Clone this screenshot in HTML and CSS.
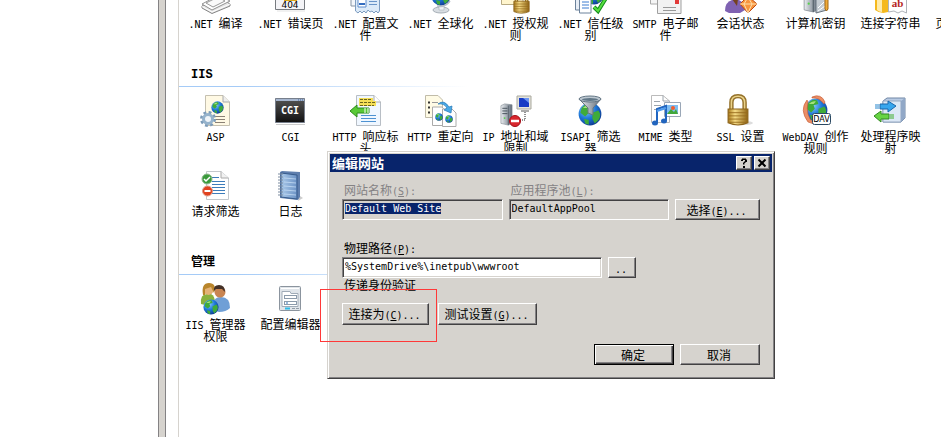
FILE: index.html
```html
<!DOCTYPE html>
<html lang="zh-CN">
<head>
<meta charset="utf-8">
<title>IIS 管理器</title>
<link rel="stylesheet" href="styles.css">
</head>
<body>
<svg class="defs" aria-hidden="true">
  <defs>
    <radialGradient id="sea" cx=".35" cy=".3" r=".8"><stop offset="0" stop-color="#8fd0ff"/><stop offset=".5" stop-color="#1e78d8"/><stop offset="1" stop-color="#0a2f86"/></radialGradient>
    <linearGradient id="gold" x2="1"><stop offset="0" stop-color="#a8791a"/><stop offset=".35" stop-color="#f6dc86"/><stop offset="1" stop-color="#8f6312"/></linearGradient>
    <linearGradient id="blue" x2="1"><stop offset="0" stop-color="#a9c8e8"/><stop offset="1" stop-color="#6c93c6"/></linearGradient>
    <linearGradient id="dark" y2="1" x2="0"><stop offset="0" stop-color="#555"/><stop offset="1" stop-color="#111"/></linearGradient>
    <linearGradient id="steel" x2="1"><stop offset="0" stop-color="#eceff2"/><stop offset="1" stop-color="#5f6b78"/></linearGradient>
    <symbol id="globe" viewBox="0 0 20 20"><circle cx="10" cy="10" r="9.5" fill="url(#sea)"/><path d="M3 5Q7 0 11 2L12 5 8 6 9 9 6 12 2 9ZM12 9 17 7Q20 11 17 15L14 18 12 14ZM5 14 9 15 9 19 6 18Z" fill="#3fab3a"/><path d="M4 5Q7 2 10 3L8 5Z" fill="#a5e27b"/></symbol>
    <symbol id="lock" viewBox="0 0 20 30" preserveAspectRatio="none"><path d="M4 15V8Q4 2 10 2T16 8V15" fill="none" stroke="#94712a" stroke-width="4"/><path d="M4 15V8Q4 2 10 2T16 8V15" fill="none" stroke="#ead28a" stroke-width="1.4"/><path d="M1 14H19V27Q10 31 1 27Z" fill="url(#gold)" stroke="#8c641b"/><path d="M1 17.500H19M1 20.500H19M1 23.500H19M2 26.500H18" stroke="#94691c" stroke-width=".8"/></symbol>
    <symbol id="server" viewBox="0 0 14 26" preserveAspectRatio="none"><path d="M1 3 5 1 13 2V23L9 25 1 23Z" fill="url(#steel)" stroke="#858d95" stroke-width=".7"/><path d="M2.500 6H8M2.500 9H8M2.500 12H8" stroke="#404b55"/><path d="M9 3V25" stroke="#56616b"/><circle cx="5" cy="17" r="1" fill="#57d04c"/></symbol>
  </defs>
</svg>
<div class="window">
  <aside class="tree"></aside>
  <div class="splitter"></div>
  <main class="features">
    <ul class="grid cut">
      <li><a href="#"><svg viewBox="0 0 32 32"><path d="M3 24 20 15 31 22V24L13 31.500 3 26Z" fill="#e5e5e5" stroke="#858585"/><path d="M3 22 20 13 31 19 13 28Z" fill="#fff" stroke="#929292"/><path d="M7 21 19 15 26 19 14 25Z" fill="#fafafa" stroke="#999"/><path d="M3 24.500 13 30 31 22" fill="none" stroke="#fff"/></svg><span><i>.NET </i>编译</span></a></li>
      <li><a href="#"><svg viewBox="0 0 32 32"><path d="M1.500 8H30.500V27.500H1.500Z" fill="#f4f4f7" stroke="#777b80"/><path d="M10 10H23V19H10Z" fill="#dba719"/><path d="M12 17H21" stroke="#775400"/><text x="16" y="26" class="t404">404</text><path d="M3 29H31" stroke="#e3e3e3"/></svg><span><i>.NET </i>错误页</span></a></li>
      <li><a href="#"><svg viewBox="0 0 32 32"><path d="M5 12H2V24H7" fill="#f3f6fa" stroke="#8794a3"/><path d="M6.500 10H30.500V29L29 31 27 29 25 31 23 29 21 30 19 28 17 31 15 29 13 31 11 29 9 31 6.500 29Z" fill="#dceaf8" stroke="#7d9cc0"/><path d="M9 14H17V25H9Z" fill="#fff" stroke="#5e8ccb"/><path d="M20 19.500H28M20 22.500H28" stroke="#6994c8"/><path d="M10 22H16" stroke="#346dc0" stroke-width="2"/></svg><span><i>.NET </i>配置文件</span></a></li>
      <li><a href="#"><svg viewBox="0 0 32 32"><ellipse cx="17" cy="28" rx="8" ry="3" fill="#d8dde2" stroke="#a7afb7"/><path d="M15 23H20V28H15Z" fill="#eef1f4" stroke="#a9b2bb" stroke-width=".6"/><use href="#globe" x="7" y="4" width="20" height="20"/><path d="M26 19Q21 26 13 24" fill="none" stroke="#b5bdc7" stroke-width="1.500"/></svg><span><i>.NET </i>全球化</span></a></li>
      <li><a href="#"><svg viewBox="0 0 32 32"><path d="M2.500 3H24V22.500H2.500Z" fill="#fff5cd" stroke="#b7aa83"/><use href="#lock" x="14" y="8" width="17" height="24"/></svg><span><i>.NET </i>授权规则</span></a></li>
      <li><a href="#"><svg viewBox="0 0 32 32"><use href="#globe" x="10" y="3" width="20" height="20"/><path d="M1.500 10H12V28H1.500Z" fill="#e7edf5" stroke="#6c829b"/><path d="M5.500 12H17V31H5.500Z" fill="#fff" stroke="#6c829b"/><path d="M8 17H15M8 20H15M8 23H15M8 26H15" stroke="#3c7dd0"/><path d="M20 25 24 29 32 16" fill="none" stroke="#138b1c" stroke-width="4"/><path d="M20 25 24 29 32 16" fill="none" stroke="#57df40" stroke-width="2"/></svg><span><i>.NET </i>信任级别</span></a></li>
      <li><a href="#"><svg viewBox="0 0 32 32"><path d="M1.500 8H23V22H1.500Z" fill="#f5f5f5" stroke="#aaa"/><path d="M8.500 14H32V31.500H8.500Z" fill="#f2f2f2" stroke="#a0a0a0"/><path d="M14 25.500H27M14 28.500H27" stroke="#999"/><path d="M26 18H30V22H26Z" fill="#e23938"/></svg><span><i>SMTP </i>电子邮件</span></a></li>
      <li><a href="#"><svg viewBox="0 0 32 32"><path d="M1 29Q1 20 8 18H15Q21 21 21 28L16 31H5Z" fill="#7f62b2"/><path d="M8 17H14L13 24Z" fill="#74411f"/><path d="M24 14 33 22 24 31 16 22Z" fill="#f8953d" stroke="#bc4915"/><path d="M16 22H33M20 22 24 31 28 22 24 15Z" fill="none" stroke="#ffe0ae"/></svg><span>会话状态</span></a></li>
      <li><a href="#"><svg viewBox="0 0 32 32"><use href="#server" x="4" y="4" width="16" height="27"/><path d="M17 14 28 11V28L17 31Z" fill="#c5ccd3" stroke="#68737e"/><path d="M19 26 25 20M19 29 26 24" stroke="#fff"/><path d="M26 13H29V27L27.500 29 26 27Z" fill="#efaa38" stroke="#a36815"/></svg><span>计算机密钥</span></a></li>
      <li><a href="#"><svg viewBox="0 0 32 32"><path d="M1 9Q9 4 18 9V28Q9 34 1 28Z" fill="#f5b91d"/><path d="M3 9Q6 7 8 7V30Q5 30 3 28Z" fill="#ffebaa"/><path d="M14.500 12H32.500V31L28 29 24 31 20 29 14.500 30Z" fill="#fff" stroke="#afb4ba"/><text x="23.500" y="25" class="tab">ab</text></svg><span>连接字符串</span></a></li>
      <li><a href="#"><svg viewBox="0 0 32 32"><path d="M3 3H29V29H3Z" fill="#fff" stroke="#999"/></svg><span>页面和控件</span></a></li>
    </ul>

    <h2>IIS</h2>
    <ul class="grid">
      <li><a href="#"><svg viewBox="0 0 32 32"><path d="M6.500 .500H24L30.500 7V30.500H6.500Z" fill="#fff9e4" stroke="#c5c0b0"/><path d="M24 .500V7H30.500" fill="#eee" stroke="#aaa"/><use href="#globe" x="12" y="6" width="13" height="13"/><path d="M16 21.500H26M16 24.500H26M16 27.500H26" stroke="#8b8175"/><circle cx="9" cy="24" r="5.500" fill="none" stroke="#7c9bb8" stroke-width="5" stroke-dasharray="2.300 2"/><circle cx="9" cy="24" r="4.500" fill="#f0f5f9" stroke="#96b3cc" stroke-width="3"/></svg><span><i>ASP</i></span></a></li>
      <li><a href="#"><svg viewBox="0 0 32 32"><path d="M1.500 3.500H30.500V27.500H1.500Z" fill="url(#dark)" stroke="#777f8c"/><path d="M2 4H30V6H2Z" fill="#a6b6cf"/><path d="M24 5H29" stroke="#3a629d" stroke-dasharray="1 1"/><text x="16" y="19" class="tcgi">CGI</text><path d="M2 29.500H31" stroke="#ccc"/></svg><span><i>CGI</i></span></a></li>
      <li><a href="#"><svg viewBox="0 0 32 32"><path d="M7.500 .500H25L31.500 7V30.500H7.500Z" fill="#f0f7ff" stroke="#b8bec5"/><path d="M25 .500V7H31.500" fill="#fff" stroke="#aaa"/><path d="M10 3H24V6H27V11H10Z" fill="#f5df57"/><path d="M11 4.500H23M11 7.500H27M11 10.500H25" stroke="#6b651d" stroke-dasharray="3 1"/><path d="M1 16 8 10V13H20V18H8V22Z" fill="#58c936" stroke="#2d8b1c"/><path d="M16 13V18M19 13V18" stroke="#fff"/><path d="M12 20.500H27M12 23.500H27M12 26.500H27" stroke="#4d92d2"/></svg><span><i>HTTP </i>响应标头</span></a></li>
      <li><a href="#"><svg viewBox="0 0 32 32"><path d="M1.500 .500H14L18.500 5V22.500H1.500Z" fill="#fffbe5" stroke="#c1bca9"/><path d="M4 7.500H6M4 12.500H6M4 17.500H6" stroke="#333" stroke-width="2"/><path d="M8 7.500H14M8 12.500H15" stroke="#999"/><path d="M8.500 12H18L21.500 16V30.500H8.500Z" fill="#fff" stroke="#aaa"/><path d="M18.500 14H28L32 18V31.500H18.500Z" fill="#fff" stroke="#aaa"/><use href="#globe" x="11" y="18" width="8" height="8"/><use href="#globe" x="21" y="20" width="8" height="8"/><path d="M14 9Q20 4 25 12L28 11 27 18 20 15 23 13Q20 8 14 9Z" fill="#49a9e5" stroke="#2779b8" stroke-width=".7"/></svg><span><i>HTTP </i>重定向</span></a></li>
      <li><a href="#"><svg viewBox="0 0 32 32"><use href="#server" x="1" y="8" width="13" height="23"/><path d="M18 1H32V14H18Z" fill="#e4e4dc" stroke="#aaa99e"/><path d="M20 3H30V12H20Z" fill="#173bc5"/><path d="M24 3H30V8Z" fill="#6c95f0"/><path d="M22 16H30" stroke="#aaa" stroke-width="2"/><path d="M26 17V25H20" fill="none" stroke="#222" stroke-dasharray="1 1"/><circle cx="16" cy="26" r="5.500" fill="#d9272e" stroke="#a60e18"/><path d="M12 26H20" stroke="#fff" stroke-width="2.500"/></svg><span><i>IP </i>地址和域限制</span></a></li>
      <li><a href="#"><svg viewBox="0 0 32 32"><use href="#globe" x="4" y="7" width="24" height="24"/><path d="M5 4Q16 9 27 4L19 13V20L14 18V13Z" fill="url(#steel)" stroke="#68747e"/><ellipse cx="16" cy="4" rx="11" ry="3" fill="#bdc8d1" stroke="#647684"/><ellipse cx="16" cy="4.500" rx="8" ry="1.500" fill="#627787"/></svg><span><i>ISAPI </i>筛选器</span></a></li>
      <li><a href="#"><svg viewBox="0 0 32 32"><path d="M2.500 .500H14L20.500 6V27.500H2.500Z" fill="#fff" stroke="#bbb"/><path d="M14 .500V6H20.500M5 6.500H11M5 10.500H12M5 14.500H12" fill="none" stroke="#9da5ad"/><path d="M15.500 7.500H31.500V21.500H15.500Z" fill="#fff" stroke="#9aa7b7"/><path d="M18 10H29V19H18Z" fill="#7fbdf2"/><path d="M18 19 22 14 25 17 27 14 29 19Z" fill="#42a83b"/><circle cx="24" cy="13" r="2" fill="#f45e2d"/><path d="M8 28V14L17 11V26" fill="none" stroke="#2166c1" stroke-width="2"/><path d="M8 16 17 13" stroke="#4f9cf0" stroke-width="2"/><ellipse cx="6" cy="28" rx="3" ry="2.500" fill="#2265be"/><ellipse cx="15" cy="26" rx="3" ry="2.500" fill="#2265be"/></svg><span><i>MIME </i>类型</span></a></li>
      <li><a href="#"><svg viewBox="0 0 32 32"><ellipse cx="20" cy="28" rx="9" ry="2" fill="#ddd"/><use href="#lock" x="3" y="-1" width="22" height="32"/></svg><span><i>SSL </i>设置</span></a></li>
      <li><a href="#"><svg viewBox="0 0 32 32"><use href="#globe" x="5" y="3" width="24" height="24"/><path d="M13 2Q22-2 26 7L25 9Q20 2 13 3ZM8 5Q0 15 9 27L15 29Q6 20 9 7Z" fill="#eb8e66" stroke="#c45730" stroke-width=".6"/><rect x="13.500" y="18.500" width="18" height="11" rx="2" fill="#fff" stroke="#2b4962"/><text x="22.500" y="27" class="tdav">DAV</text></svg><span><i>WebDAV </i>创作规则</span></a></li>
      <li><a href="#"><svg viewBox="0 0 32 32"><path d="M9 6 13 3H31V23L27 27H9Z" fill="#b9cbe4" stroke="#7187a5"/><path d="M9 6H27V27H9Z" fill="#dce8f6" stroke="#96a9c2"/><path d="M27 6 31 3V23L27 27Z" fill="#91a8c7"/><path d="M6 9H14V6L22 11 14 17V14H6Z" fill="#37a6ed" stroke="#1b67ab"/><path d="M2 9V14M4 9V14" stroke="#2686cc"/><path d="M0 21 7 16V19H15V24H7V27Z" fill="#67d443" stroke="#328922"/><path d="M17 19V24M19 19V24" stroke="#3fad2a"/></svg><span>处理程序映射</span></a></li>
      <li class="newline"><a href="#"><svg viewBox="0 0 32 32"><path d="M7.500 1.500H22L29.500 8V29.500H7.500Z" fill="#fff" stroke="#c4c8cc"/><path d="M22 1.500V8H29.500" fill="#f1f1f1" stroke="#aaa"/><path d="M13 7.500H20M13 11.500H26M13 14.500H26M13 17.500H26M13 20.500H26M13 23.500H26" stroke="#3d7cba"/><circle cx="8" cy="9" r="5" fill="#3a9a3b" stroke="#8eba8e"/><path d="M5 9 7 11 11 7" fill="none" stroke="#fff" stroke-width="1.500"/><circle cx="8.500" cy="21" r="5" fill="#e1421f" stroke="#e09b8a"/><path d="M5.500 21H11.500" stroke="#fff" stroke-width="2"/></svg><span>请求筛选</span></a></li>
      <li><a href="#"><svg viewBox="0 0 32 32"><path d="M26 26 29 28 24 31Z" fill="#ccc"/><path d="M6 2 8 1 26 2V27L24 30 6 28Z" fill="#5f7fae"/><path d="M7 3 23 5V29L7 27Z" fill="url(#blue)" stroke="#375b8b"/><path d="M10 8 22 9M10 12 22 13M10 16 22 17M10 20 22 21M10 24 22 25" stroke="#c4dcf4" stroke-width=".8"/><path d="M4 4H9M4 7H9M4 10H9M4 13H9M4 16H9M4 19H9M4 22H9M4 25H9" stroke="#7d8ba0" stroke-width="1.200"/></svg><span>日志</span></a></li>
    </ul>

    <h2>管理</h2>
    <ul class="grid">
      <li><a href="#"><svg viewBox="0 0 32 32"><path d="M2 21Q1 11 8 11H12Q16 13 16 20L10 23Z" fill="#89b23e"/><circle cx="9.500" cy="7" r="5" fill="#e4b276"/><path d="M4 12Q2 0 10 0T15 10L12 4 6 6 6 12Z" fill="#b9852b"/><path d="M13 27Q13 14 22 14T31 25Q27 29 20 29Z" fill="#6f9fd6"/><circle cx="21" cy="9" r="5.500" fill="#c98552"/><path d="M15 8Q14 2 20 2T26 9L23 6 17 6Z" fill="#443127"/><use href="#globe" x="4" y="16" width="16" height="16"/></svg><span><i>IIS </i>管理器权限</span></a></li>
      <li><a href="#"><svg viewBox="0 0 32 32"><rect x="5.500" y="3.500" width="21" height="24" rx="1" fill="#e0e5ea" stroke="#8b949e"/><path d="M7 5.500H25" stroke="#fff"/><path d="M8 8.500H16L17 10.500H24V23.500H8Z" fill="#fff" stroke="#a0abb7"/><rect x="10.500" y="12.500" width="12" height="3" fill="#fff" stroke="#8c9bab"/><rect x="10.500" y="18.500" width="12" height="3" fill="#fff" stroke="#8c9bab"/><path d="M12 20H14" stroke="#3275bd"/><path d="M11 25.500H16" stroke="#2ebbe8" stroke-width="2"/><path d="M18 25.500H21M22 25.500H25" stroke="#929da8"/></svg><span>配置编辑器</span></a></li>
    </ul>
  </main>
</div>

<section class="dialog" role="dialog" aria-labelledby="dlg-title">
  <header class="titlebar">
    <h1 id="dlg-title">编辑网站</h1>
    <button type="button" class="cap" aria-label="帮助"><svg viewBox="0 0 12 10"><path d="M3 3V1.500H4V.500H8V1.500H9V4H7.500V5H6.500V6.500H5V4.500H6V3.500H7V2H5V3ZM5 8H7V10H5Z"/></svg></button>
    <button type="button" class="cap" aria-label="关闭"><svg viewBox="0 0 12 10"><path d="M2.500 1.500 9.500 8.500M9.500 1.500 2.500 8.500" fill="none" stroke="#000" stroke-width="2"/></svg></button>
  </header>
  <form class="body">
    <div class="row">
      <div class="field grow">
        <label class="dim" for="site">网站名称<i>(<u>S</u>):</i></label>
        <input id="site" class="locked" value="Default Web Site" readonly>
      </div>
      <div class="field grow">
        <label class="dim" for="pool">应用程序池<i>(<u>L</u>):</i></label>
        <input id="pool" class="locked" value="DefaultAppPool" readonly>
      </div>
      <button type="button" class="pick">选择<i>(<u>E</u>)...</i></button>
    </div>
    <div class="row path">
      <div class="field wide">
        <label for="path">物理路径<i>(<u>P</u>):</i></label>
        <input id="path" value="%SystemDrive%\inetpub\wwwroot">
      </div>
      <button type="button" class="browse"><i>..</i></button>
    </div>
    <p>传递身份验证</p>
    <div class="row auth">
      <button type="button" class="connect">连接为<i>(<u>C</u>)...</i></button>
      <button type="button" class="test">测试设置<i>(<u>G</u>)...</i></button>
    </div>
    <footer>
      <button type="submit" class="default">确定</button>
      <button type="button">取消</button>
    </footer>
  </form>
</section>
<div class="marker"></div>
<script src="select.js"></script>
</body>
</html>
```
FILE: styles.css
```css
:root {
  --face: #d6d3ce;
  --shade: #848284;
  --dark: #424142;
  --navy: #08246b;
}

* { box-sizing: border-box; }

html, body { height: 100%; }

body {
  margin: 0;
  overflow: hidden;
  background: #fff;
  color: #000;
  font: 12px/12px "Noto Sans CJK SC", sans-serif;
}

i, input {
  font: 10px/12px "DejaVu Sans Mono", monospace;
}

/* Latin runs are smaller, so a short line box keeps mixed lines at 12px */
i { line-height: 8px; white-space: pre-wrap; }

.defs { position: absolute; width: 0; height: 0; }

.window { display: flex; height: 100vh; overflow: hidden; }

.tree { flex: 0 0 158px; }

.splitter {
  flex: 0 0 8px;
  background: var(--face);
  border: solid var(--shade);
  border-width: 0 1px;
}

.features {
  flex: 1;
  min-width: 0;
  margin-left: 12px;
  border-left: 1px solid var(--face);
  overflow: hidden;
}

.grid {
  display: grid;
  grid-template-columns: repeat(11, 75px);
  grid-auto-rows: 75px;
  margin: 0;
  padding: 8px 0 0;
  list-style: none;
}

.grid.cut { margin-top: -18px; padding-top: 0; }

.newline { grid-column: 1; }

.grid a {
  display: block;
  padding: 0 5px 0 3px;
  color: inherit;
  text-align: center;
  text-decoration: none;
}

.grid svg {
  display: block;
  width: 32px;
  height: 32px;
  margin: 0 0 3px 17px;
  overflow: visible;
}

.grid span { display: block; }

h2 {
  margin: 0;
  padding: 12px 12px 5px;
  border-bottom: 1px solid;
  border-image: linear-gradient(90deg, #a5cbf7, #a5cbf7 60px, #fff 290px) 1;
  font: bold 12px/12px "Liberation Mono", "Noto Sans CJK SC", monospace;
}

.t404, .tab, .tcgi, .tdav { text-anchor: middle; }
.t404 { font: 9px "DejaVu Sans", sans-serif; }
.tab { font: bold 11px "Liberation Serif", serif; fill: #b51e22; }
.tcgi { font: bold 10px "DejaVu Sans Mono", monospace; fill: #fff; }
.tdav { font: 8px "DejaVu Sans", sans-serif; }

.dialog {
  position: absolute;
  left: 327px;
  top: 151px;
  width: 448px;
  padding: 1px;
  background: var(--face);
  border: 1px solid;
  border-color: var(--face) var(--dark) var(--dark) var(--face);
  box-shadow: inset 1px 1px #fff, inset -1px -1px var(--shade);
}

.titlebar {
  display: flex;
  align-items: center;
  gap: 2px;
  height: 18px;
  margin: 1px 1px 0;
  padding: 0 2px;
  background: var(--navy);
}

h1 {
  flex: 1;
  margin: 0;
  color: #fff;
  font-size: 13px;
  line-height: 16px;
}

button {
  width: 80px;
  height: 21px;
  padding: 0 2px 0 0;
  background: var(--face);
  border: 1px solid;
  border-color: #fff var(--dark) var(--dark) #fff;
  box-shadow: inset -1px -1px var(--shade);
  color: #000;
  font: inherit;
  white-space: nowrap;
}

.cap { width: 16px; height: 14px; padding: 0 1px; }
.cap svg { display: block; width: 12px; height: 10px; }

.body { padding: 12px 13px 12px; }

.row { display: flex; align-items: flex-end; gap: 6px; }

.field { display: flex; flex-direction: column; gap: 3px; }
.grow { flex: 1; min-width: 0; }
.wide { flex: 0 0 260px; }

label { padding-left: 2px; }
.dim { color: var(--shade); }

input {
  width: 100%;
  height: 21px;
  padding: 0 2px 2px;
  background: #fff;
  border: 1px solid;
  border-color: var(--shade) #fff #fff var(--shade);
  box-shadow: inset 1px 1px var(--dark), inset -1px -1px var(--face);
  border-radius: 0;
  outline: none;
  color: #000;
}

.locked { background: var(--face); }

::selection { background: var(--navy); color: #fff; }

.path { margin-top: 22px; }
.pick { width: 85px; }
.browse { width: 28px; }

p { margin: 1px 0 12px 2px; }

.auth { gap: 9px; }
.auth button { height: 22px; }
.connect { width: 87px; }
.test { width: 99px; }

footer {
  display: flex;
  justify-content: flex-end;
  gap: 6px;
  margin-top: 19px;
}

.default {
  border-color: #000;
  box-shadow: inset 1px 1px #fff, inset -1px -1px var(--dark), inset -2px -2px var(--shade);
}

.marker {
  position: absolute;
  left: 320px;
  top: 289px;
  width: 117px;
  height: 53px;
  border: 1px solid #ff3838;
  pointer-events: none;
}
```
FILE: select.js
```js
const site = document.getElementById("site");
site.focus();
site.select();
```
